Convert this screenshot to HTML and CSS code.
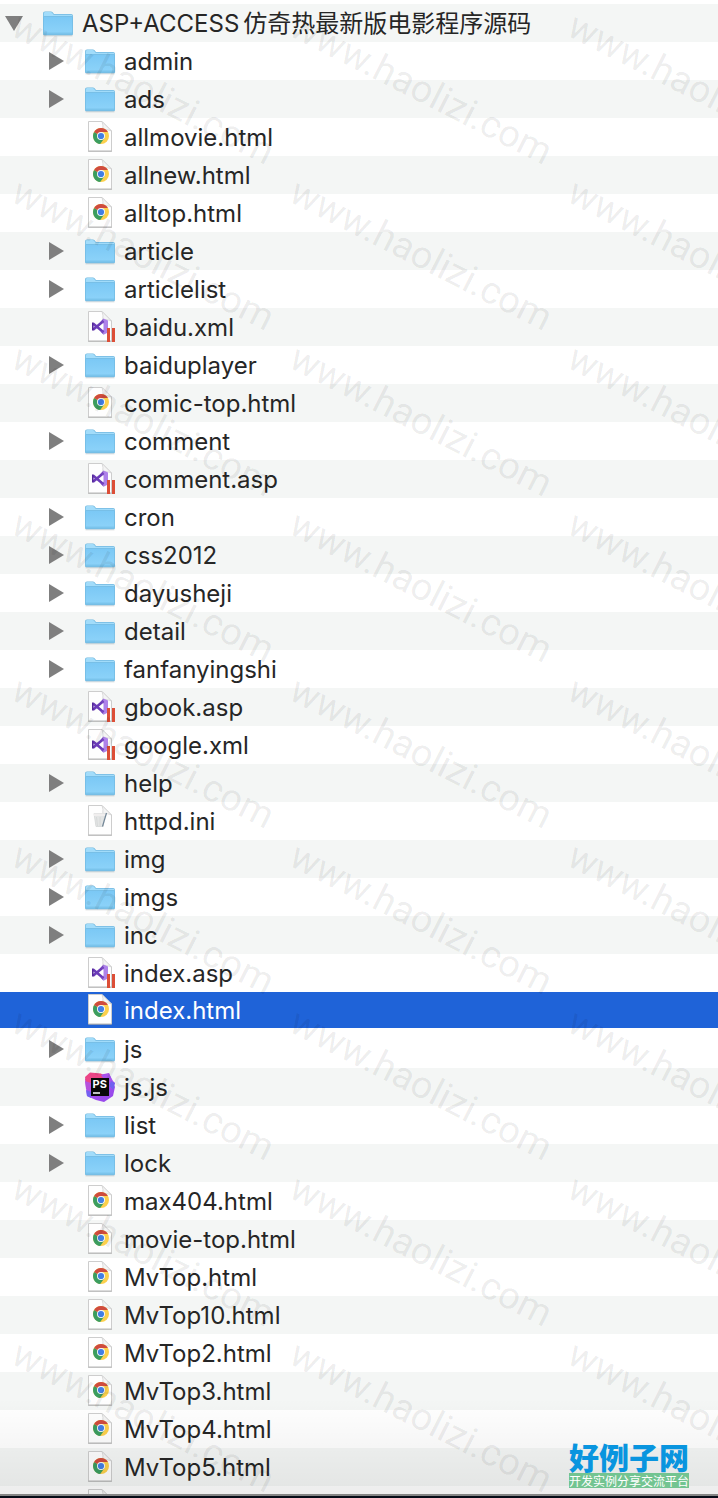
FILE: index.html
```html
<!DOCTYPE html>
<html lang="zh-CN">
<head>
<meta charset="utf-8">
<meta name="viewport" content="width=device-width, initial-scale=1">
<title>ASP+ACCESS仿奇热最新版电影程序源码</title>
<link rel="stylesheet" href="styles.css">
<script src="tree.js" defer></script>
</head>
<body>
<svg class="defs" aria-hidden="true">
  <defs>
    <linearGradient id="folder-face" x1="0" y1="0" x2="0" y2="1"><stop offset="0" stop-color="#7bc8f5"/><stop offset="1" stop-color="#8dd3f9"/></linearGradient>
    <linearGradient id="ps-face" x1="0" y1="0" x2="1" y2="1"><stop offset="0" stop-color="#c452d8"/><stop offset=".5" stop-color="#a44cf0"/><stop offset="1" stop-color="#9148e8"/></linearGradient>
    <symbol id="toggle" viewBox="0 0 20 20"><path d="M3 1 18 10 3 19Z" fill="#7f7f7f"/></symbol>
    <symbol id="folder" viewBox="0 0 32 32">
      <path d="M1.5 28.8h29" stroke="#000" stroke-opacity=".16" stroke-width="1"/>
      <path d="M1 6.5Q1 4.5 3 4.5H8.8Q10 4.5 10.8 5.5L12 7H29Q31 7 31 9V27Q31 28.2 29.6 28.2H2.4Q1 28.2 1 27Z" fill="#72b9e0"/>
      <path d="M1.7 6.6Q1.7 5.1 3.2 5.1H8.6Q9.6 5.1 10.3 6L11.6 7.7H29Q30.3 7.7 30.3 9V10H1.7Z" fill="#a2dcfa"/>
      <path d="M1.7 9.8H30.3V27.2H1.7Z" fill="url(#folder-face)"/>
      <path d="M1.7 9.5H30.3M1.7 26.2H30.3" stroke="#68b4e0" stroke-width=".7" fill="none"/>
    </symbol>
    <symbol id="page" viewBox="0 0 32 32">
      <path d="M4.5 .5H18L27.5 10V30H4.5Z" fill="#fefefe" stroke="#cdcdcd"/>
      <path d="M4 30.3H28" stroke="#999" stroke-opacity=".6"/>
      <path d="M18 .5Q19.5 4 18.8 8.8Q24 8 27.5 10Z" fill="#f4f4f4" stroke="#cfcfcf" stroke-width=".7"/>
    </symbol>
    <symbol id="html" viewBox="0 0 32 32">
      <use href="#page"/>
      <circle cx="17" cy="15" r="8" fill="#fcd04c"/>
      <path d="M17 15 10.1 11A8 8 0 0 0 16.2 23L20.5 17Z" fill="#3b9d60"/>
      <path d="M17 15 10.1 11A8 8 0 0 1 23.9 11H17Z" fill="#cf4b3e"/>
      <circle cx="17" cy="15" r="4" fill="#f5f7fb"/>
      <circle cx="17" cy="15" r="3.1" fill="#427fe4"/>
    </symbol>
    <symbol id="vs" viewBox="0 0 32 32">
      <use href="#page"/>
      <path d="M19.5 7.5 24 9.5V21.5L19.5 23.8Z" fill="#ae82ea"/>
      <path d="M9 12.4 19.5 21.2M9 18.8 19.5 10" stroke="#6b3bb8" stroke-width="2.6" fill="none"/>
      <path d="M16.5 10.8 19.5 7.5V12.5ZM16.5 20.5 19.5 23.8V18.8Z" fill="#7745c2"/>
      <path d="M8.8 11.5V19.5" stroke="#54289a" stroke-width="1.6"/>
      <path d="M23 17H26V31H23ZM28 17H31V31H28Z" fill="#dc4e37"/>
    </symbol>
    <symbol id="ini" viewBox="0 0 32 32">
      <use href="#page"/>
      <path d="M10 8.5H21L19 21.5H12Z" fill="#e3e5e5" stroke="#d3d6d6" stroke-width=".8"/>
      <path d="M10 8.5H21V11H10Z" fill="#f0eeee"/>
      <path d="M22.5 8 18.5 21.5" stroke="#718596" stroke-width="1.2"/>
      <path d="M12.5 12 13.5 21M16 12V21" stroke="#d3d6d6" stroke-width=".8"/>
    </symbol>
    <symbol id="ps" viewBox="0 0 32 32">
      <path d="M1 8 8 2 15 4 25 2 28 10 31 16 29 25 20 31 12 29 3 25Z" fill="url(#ps-face)"/>
      <path d="M1 6 6 1.5 17 2.5 24 8 8 14 2 12Z" fill="#ec4587"/>
      <path d="M1 10 7 12V20L2 18Z" fill="#b650dc"/>
      <path d="M17 4 25 2.5 29 10 31 12 27 18Z" fill="#a951ed"/>
      <path d="M27 10 31 12 29.5 19 25 15Z" fill="#7160ef"/>
      <path d="M2 19 7 21V27L3 25Z" fill="#7361f1"/>
      <path d="M7 7H25V25H7Z" fill="#090909"/>
      <path d="M9 22H16" stroke="#fff" stroke-width="1.5"/>
      <text class="ps-label" x="8.5" y="17">PS</text>
    </symbol>
  </defs>
</svg>
<main class="browser">
  <ul class="tree" id="tree"></ul>
  <div class="shade"></div>
  <div class="watermarks" id="watermarks" aria-hidden="true"></div>
  <div class="brand">
    <strong class="brand-name">好例子网</strong>
    <span class="brand-line">开发实例分享交流平台</span>
  </div>
</main>
</body>
</html>
```
FILE: styles.css
```css
* { box-sizing: border-box; }

body {
  margin: 0;
  background: #fff;
  color: #262626;
  font-family: Inter, "Noto Sans CJK SC", sans-serif;
}

.defs { position: absolute; width: 0; height: 0; }

.browser {
  position: relative;
  overflow: hidden;
  padding-top: 4px;
  border-bottom: 2px solid #060b17;
}

.tree {
  margin: 0;
  padding: 0;
  list-style: none;
  border-bottom: 2px solid #858585;
}

.row {
  display: flex;
  align-items: center;
  height: 38px;
  padding-left: 46px;
  font-size: 24px;
  line-height: 36px;
  white-space: nowrap;
}

.row:nth-child(odd) { background: #f4f6f5; }
.row.root { padding-left: 4px; }
.row.root .toggle svg { transform: rotate(90deg); }

.row.selected {
  height: 36px;
  margin-bottom: 2px;
  background: #1f63d8;
  color: #fff;
}

.row.cut {
  height: 8px;
  align-items: flex-start;
  padding-top: 3px;
  overflow: hidden;
}

.name { padding-top: 2px; }
.name span { margin-left: 4px; }

.toggle {
  width: 20px;
  height: 20px;
  margin-right: 18px;
  padding: 0;
  border: 0;
  background: none;
}

.toggle svg { display: block; width: 20px; height: 20px; }

.icon {
  flex: none;
  width: 32px;
  height: 32px;
  margin-right: 8px;
}

.ps-label { font: 700 11px Inter, sans-serif; fill: #fff; }

.shade {
  position: absolute;
  inset: auto 0 2px;
  height: 96px;
  background: linear-gradient(transparent, rgba(0, 0, 0, .07));
  pointer-events: none;
}

.watermarks {
  position: absolute;
  inset: 0;
  display: grid;
  grid-template-columns: repeat(3, 278px);
  grid-auto-rows: 166px;
  padding: 3px 0 0 15px;
  overflow: hidden;
  pointer-events: none;
}

.watermarks span {
  color: rgba(0, 0, 0, .075);
  font: 38px/40px Roboto, sans-serif;
  transform: rotate(27deg);
  transform-origin: 0 20px;
}

.brand {
  position: absolute;
  right: 29px;
  bottom: 8px;
  display: flex;
  flex-direction: column;
  align-items: center;
  font-family: "Noto Sans CJK SC", sans-serif;
}

.brand-name {
  color: #0995df;
  font-size: 30px;
  font-weight: 900;
  line-height: 34px;
}

.brand-line {
  background: #73c491;
  color: #fff;
  font-size: 12px;
  line-height: 15px;
}
```
FILE: tree.js
```js
const folders = new Set(("admin ads article articlelist baiduplayer comment cron css2012 dayusheji detail " +
  "fanfanyingshi help img imgs inc js list lock").split(" "));

const names = ("admin ads allmovie.html allnew.html alltop.html article articlelist baidu.xml baiduplayer " +
  "comic-top.html comment comment.asp cron css2012 dayusheji detail fanfanyingshi gbook.asp google.xml help " +
  "httpd.ini img imgs inc index.asp index.html js js.js list lock max404.html movie-top.html MvTop.html " +
  "MvTop10.html MvTop2.html MvTop3.html MvTop4.html MvTop5.html").split(" ");

const fileIcons = { html: "html", xml: "vs", asp: "vs", ini: "ini", js: "ps" };

function row(name, icon, state) {
  const toggle = icon === "folder"
    ? `<button class="toggle" type="button" aria-label="展开或收起"><svg><use href="#toggle"/></svg></button>`
    : `<span class="toggle"></span>`;
  return `<li class="row ${state}">${toggle}<svg class="icon" aria-hidden="true"><use href="#${icon}"/></svg><div class="name">${name}</div></li>`;
}

const rows = names.map(name => row(
  name,
  folders.has(name) ? "folder" : fileIcons[name.split(".").pop()],
  name === "index.html" ? "selected" : ""
));

document.getElementById("tree").innerHTML =
  row("ASP+ACCESS<span>仿奇热最新版电影程序源码</span>", "folder", "root") + rows.join("") + row("", "html", "cut");

document.getElementById("watermarks").innerHTML = "<span>www.haolizi.com</span>".repeat(27);
```
